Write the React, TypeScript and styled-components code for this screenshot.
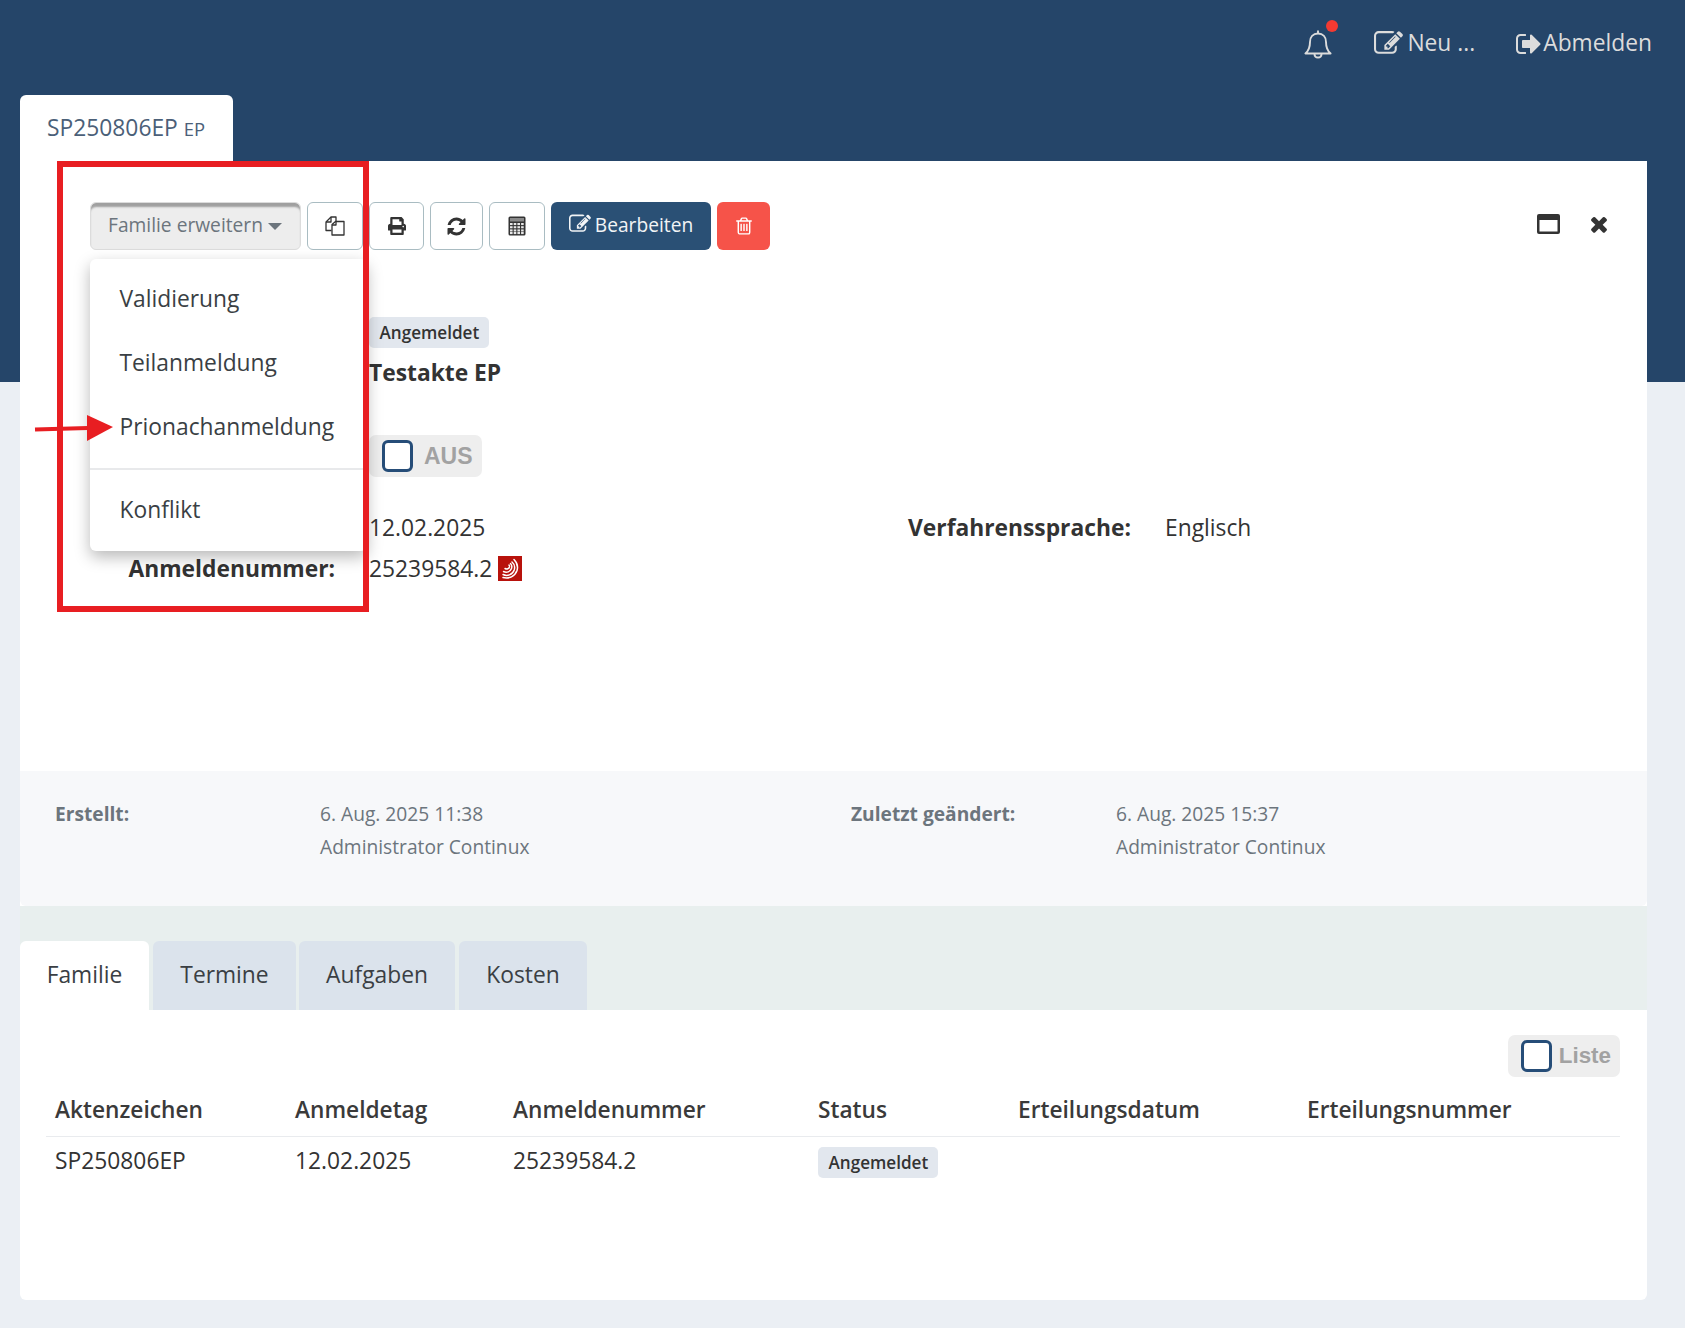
import React from "react";
import styled, { createGlobalStyle } from "styled-components";
import { FaPrint } from "react-icons/fa";

const Global = createGlobalStyle`
  html, body { margin: 0; padding: 0; }
  body {
    height: 1328px;
    overflow: hidden;
    background: linear-gradient(#254569 0, #254569 382px, #ebeff4 382px);
    font-family: "Open Sans", "Noto Sans", sans-serif;
    font-size: 22.8px;
    color: #333;
  }
  * { box-sizing: border-box; }
`;

const TopBar = styled.header`
  height: 95px;
  display: flex;
  align-items: center;
  justify-content: flex-end;
  padding: 0 33px 8px 0;
  color: #dcdcdc;
`;
const BellWrap = styled.span`
  position: relative;
  display: flex;
  margin-right: 42px;
`;
const Dot = styled.span`
  position: absolute;
  left: 22px;
  top: -8px;
  width: 12px;
  height: 12px;
  border-radius: 50%;
  background: #f33a32;
`;
const TopLink = styled.span<{ $gap: number; $ml?: number }>`
  display: flex;
  align-items: center;
  gap: ${(p) => p.$gap}px;
  margin-left: ${(p) => p.$ml ?? 0}px;
  line-height: 1;
`;
const TabStrip = styled.div`
  display: flex;
  padding-left: 20px;
`;
const DocTab = styled.div`
  width: 213px;
  height: 66px;
  background: #fff;
  border-radius: 6px 6px 0 0;
  display: flex;
  align-items: center;
  padding: 0 0 2px 27px;
  color: #4b6078;
  small { font-size: 18.4px; margin-left: 6px; padding-top: 3px; }
`;
const Card = styled.main`
  position: relative;
  margin: 0 38px 0 20px;
  height: 1139px;
  background: #fff;
  border-radius: 0 0 6px 6px;
`;
const TopSection = styled.section`
  position: relative;
  height: 610px;
  padding-top: 41px;
`;
const Toolbar = styled.div`
  display: flex;
  align-items: flex-start;
  padding-left: 70px;
  height: 48px;
`;
const FamilyButton = styled.button`
  width: 211px;
  height: 48px;
  margin-right: 6px;
  padding: 0 1px 4px 0;
  border: 1px solid #dcdcdc;
  border-radius: 6px;
  background: #ededed;
  box-shadow: inset 0 5px 2px -1px #a0a0a0;
  color: #6c757d;
  font: 400 19.2px "Open Sans", sans-serif;
  display: flex;
  align-items: center;
  justify-content: center;
  gap: 5px;
`;
const Caret = styled.i`
  width: 0;
  height: 0;
  margin-top: 4px;
  border-left: 7px solid transparent;
  border-right: 7px solid transparent;
  border-top: 7px solid #6c757d;
`;
const IconButton = styled.button<{ $w: number }>`
  width: ${(p) => p.$w}px;
  height: 48px;
  margin-right: 6px;
  border: 1px solid #a9bcc2;
  border-radius: 6px;
  background: #fff;
  color: #333;
  display: flex;
  align-items: center;
  justify-content: center;
  padding: 0;
`;
const EditButton = styled.button`
  width: 160px;
  height: 48px;
  margin-right: 6px;
  border: 0;
  border-radius: 6px;
  background: #2a5075;
  color: #f2f4f6;
  font: 400 19.2px "Open Sans", sans-serif;
  display: flex;
  align-items: center;
  justify-content: center;
  gap: 4px;
  padding: 0 0 4px;
`;
const DeleteButton = styled.button`
  width: 53px;
  height: 48px;
  border: 0;
  border-radius: 6px;
  background: #f65349;
  color: #fff;
  display: flex;
  align-items: center;
  justify-content: center;
  padding: 0;
`;
const WindowTools = styled.div`
  margin-left: auto;
  padding: 10px 36px 0 0;
  display: flex;
  align-items: center;
  gap: 27px;
  color: #333;
`;
const ValueRow = styled.div<{ $top: number; $h: number }>`
  display: grid;
  grid-template-columns: 315px 34px 539px 222px 35px 1fr;
  align-items: center;
  margin-top: ${(p) => p.$top}px;
  height: ${(p) => p.$h}px;
`;
const Label = styled.div<{ $col: number }>`
  grid-column: ${(p) => p.$col};
  font-weight: 700;
  text-align: right;
  white-space: nowrap;
`;
const Value = styled.div<{ $col: number }>`
  grid-column: ${(p) => p.$col};
  display: flex;
  align-items: center;
  gap: 6px;
`;
const Title = styled.div`
  grid-column: 3;
  font-weight: 700;
`;
const Badge = styled.span`
  display: inline-flex;
  align-items: center;
  height: 31px;
  padding: 0 10px 0 10.500px;
  border-radius: 5px;
  background: #e2e7ee;
  color: #333;
  font-size: 17.1px;
  font-weight: 600;
`;
const RowBadge = styled(Badge)`
  margin-top: 2px;
  vertical-align: middle;
`;
const Toggle = styled.span<{ $size: number; $gap: number; $pad: number }>`
  display: inline-flex;
  align-items: center;
  height: 42px;
  padding: 0 9px 0 ${(p) => p.$pad}px;
  gap: ${(p) => p.$gap}px;
  border-radius: 7px;
  background: #eeeeee;
  color: #a2a2a2;
  font: 700 ${(p) => p.$size}px "Liberation Sans", Arial, sans-serif;
`;
const Check = styled.i`
  width: 31px;
  height: 32px;
  border: 3.5px solid #264d78;
  border-radius: 6px;
  background: #fff;
`;
const Menu = styled.nav`
  position: absolute;
  left: 70px;
  top: 98px;
  width: 277px;
  height: 292px;
  padding-top: 8px;
  background: #fff;
  border-radius: 6px;
  box-shadow: 0 6px 16px rgba(0, 0, 0, 0.28);
  z-index: 2;
`;
const MenuItem = styled.div`
  height: 64px;
  line-height: 64px;
  padding-left: 29.5px;
  color: #3a3f44;
`;
const MenuDivider = styled.hr`
  margin: 9px 0 8px;
  border: 0;
  border-top: 2px solid #e8e9eb;
`;
const Frame = styled.div`
  position: absolute;
  left: 37px;
  top: 0;
  width: 312px;
  height: 451px;
  border: 6px solid #e81e22;
  z-index: 3;
  pointer-events: none;
`;
const Arrow = styled.svg`
  position: absolute;
  left: 12px;
  top: 252px;
  z-index: 4;
`;
const Meta = styled.section`
  height: 135px;
  padding: 26px 0 0 35px;
  display: grid;
  grid-template-columns: 265px 531px 265px 1fr;
  background: #f7f8fa;
  border-radius: 0 0 6px 6px;
  color: #6c757d;
  font-size: 19.2px;
  line-height: 33px;
  b { font-weight: 700; }
`;
const TabBand = styled.div`
  height: 104px;
  padding-top: 35px;
  display: flex;
  background: #e8efee;
`;
const PanelTab = styled.div<{ $w: number; $active?: boolean; $gap: number }>`
  width: ${(p) => p.$w}px;
  margin-right: ${(p) => p.$gap}px;
  height: 69px;
  padding-bottom: 2px;
  display: flex;
  align-items: center;
  justify-content: center;
  border-radius: 6px 6px 0 0;
  background: ${(p) => (p.$active ? "#fff" : "#dbe3ec")};
  color: #3a3f44;
`;
const Panel = styled.section`
  padding: 25px 27px 0 26px;
`;
const PanelTools = styled.div`
  display: flex;
  justify-content: flex-end;
  height: 42px;
`;
const Table = styled.table`
  width: 100%;
  border-collapse: collapse;
  table-layout: fixed;
`;
const Th = styled.th<{ $w?: number }>`
  width: ${(p) => (p.$w ? `${p.$w}px` : "auto")};
  height: 59px;
  padding: 6px 0 0 9px;
  text-align: left;
  font-weight: 600;
  font-size: 22.7px;
  color: #3a3a3a;
  border-bottom: 1px solid #e9ebee;
  white-space: nowrap;
`;
const Td = styled.td`
  height: 47px;
  padding: 2px 0 0 9px;
  vertical-align: middle;
`;

const Fa = ({ d, size, color = "currentColor" }: { d: string; size: number; color?: string }) => (
  <svg width={size} height={size} viewBox="0 0 1792 1792" fill={color} aria-hidden>
    <path d={d} />
  </svg>
);
const EDIT =
  "M888 1184l116-116-152-152-116 116v56h96v96h56zm440-720q-16-16-33 1l-350 350q-17 17-1 33t33-1l350-350q17-17 1-33zm80 594v190q0 119-84.500 203.500t-203.500 84.500h-832q-119 0-203.500-84.500t-84.500-203.500v-832q0-119 84.500-203.500t203.500-84.500h832q63 0 117 25 15 7 18 23 3 17-9 29l-49 49q-14 14-32 8-23-6-45-6h-832q-66 0-113 47t-47 113v832q0 66 47 113t113 47h832q66 0 113-47t47-113v-126q0-13 9-22l64-64q15-15 35-7t20 29zm-96-738l288 288-672 672h-288v-288zm444 132l-92 92-288-288 92-92q28-28 68-28t68 28l152 152q28 28 28 68t-28 68z";
const SIGNOUT =
  "M704 1440q0 4 1 20t.5 26.500-3 23.500-10 19.500-20.500 6.500h-320q-119 0-203.500-84.500t-84.500-203.500v-704q0-119 84.500-203.500t203.500-84.500h320q13 0 22.500 9.500t9.500 22.500q0 4 1 20t.5 26.500-3 23.500-10 19.500-20.500 6.500h-320q-66 0-113 47t-47 113v704q0 66 47 113t113 47h312l11.500 1 11.500 3 8 5.500 7 9 2 13.500zm928-544q0 26-19 45l-544 544q-19 19-45 19t-45-19-19-45v-288h-448q-26 0-45-19t-19-45v-384q0-26 19-45t45-19h448v-288q0-26 19-45t45-19 45 19l544 544q19 19 19 45z";
const REFRESH =
  "M1639 1056q0 5-1 7-64 268-268 434.500t-478 166.500q-146 0-282.500-55t-243.500-157l-129 129q-19 19-45 19t-45-19-19-45v-448q0-26 19-45t45-19h448q26 0 45 19t19 45-19 45l-137 137q71 66 161 102t187 36q134 0 250-65t186-179q11-17 53-117 8-23 30-23h192q13 0 22.500 9.500t9.500 22.500zm25-800v448q0 26-19 45t-45 19h-448q-26 0-45-19t-19-45 19-45l138-138q-148-137-349-137-134 0-250 65t-186 179q-11 17-53 117-8 23-30 23h-199q-13 0-22.500-9.500t-9.500-22.500v-7q65-268 270-434.500t480-166.500q146 0 284 55.500t245 156.500l130-129q19-19 45-19t45 19 19 45z";
const TRASH =
  "M704 736v576q0 14-9 23t-23 9h-64q-14 0-23-9t-9-23v-576q0-14 9-23t23-9h64q14 0 23 9t9 23zm256 0v576q0 14-9 23t-23 9h-64q-14 0-23-9t-9-23v-576q0-14 9-23t23-9h64q14 0 23 9t9 23zm256 0v576q0 14-9 23t-23 9h-64q-14 0-23-9t-9-23v-576q0-14 9-23t23-9h64q14 0 23 9t9 23zm128 724v-948h-896v948q0 22 7 40.500t14.500 27 10.500 8.500h832q3 0 10.500-8.500t14.500-27 7-40.500zm-672-1076h448l-48-117q-7-9-17-11h-317q-10 2-17 11zm928 32v64q0 14-9 23t-23 9h-96v948q0 83-47 143.500t-113 60.500h-832q-66 0-113-63t-47-146v-943h-96q-14 0-23-9t-9-23v-64q0-14 9-23t23-9h309l70-167q15-37 54-63t79-26h320q40 0 79 26t54 63l70 167h309q14 0 23 9t9 23z";
const TIMES =
  "M1490 1322q0 40-28 68l-136 136q-28 28-68 28t-68-28l-294-294-294 294q-28 28-68 28t-68-28l-136-136q-28-28-28-68t28-68l294-294-294-294q-28-28-28-68t28-68l136-136q28-28 68-28t68 28l294 294 294-294q28-28 68-28t68 28l136 136q28 28 28 68t-28 68l-294 294 294 294q28 28 28 68z";

const Bell = () => (
  <svg width="28" height="32" viewBox="0 0 28 30" fill="none" stroke="#dcdcdc" strokeWidth="1.9" strokeLinejoin="round" aria-hidden>
    <path d="M14 4.500c-5 0-8 3.600-8 8.500 0 6-1.600 9-4.600 11.500h25.200C23.600 22 22 19 22 13c0-4.900-3-8.500-8-8.500z" />
    <path d="M14 1.500v3" />
    <path d="M10.500 25c0 2.200 1.500 3.500 3.500 3.500s3.500-1.300 3.500-3.500" />
  </svg>
);
const Files = () => (
  <svg width="20" height="20" viewBox="0 0 20 20" fill="none" stroke="#333" strokeWidth="1.3" strokeLinejoin="round" aria-hidden>
    <path d="M6.500 14.500H1V6l5-5h5v5" />
    <path d="M6 1v5H1" />
    <path d="M7 19V8.500L10.500 5.500H19V19z" fill="#fff" />
    <path d="M11 5.500V9H7" />
  </svg>
);
const Calculator = () => (
  <svg width="18" height="20" viewBox="0 0 18 20" aria-hidden>
    <rect x="0.500" y="0.500" width="17" height="19" rx="1.500" fill="#333" />
    <rect x="2" y="2" width="14" height="3.500" fill="#8a8a8a" />
    <g fill="#e8e8e8">
      {[7, 10.2, 13.4, 16].map((y) =>
        [2, 5.700, 9.400, 13.100].map((x) => <rect key={`${x}-${y}`} x={x} y={y} width="2.600" height="2.100" />)
      )}
    </g>
  </svg>
);
const WindowIcon = () => (
  <svg width="23" height="20" viewBox="0 0 23 20" aria-hidden>
    <rect width="23" height="20" rx="2" fill="#333" />
    <rect x="2.500" y="6" width="18" height="11.500" fill="#fff" />
  </svg>
);
const EpLogo = () => (
  <svg width="24" height="25" viewBox="0 0 24 25" aria-hidden>
    <rect width="24" height="25" fill="#b8120c" />
    <g fill="none" stroke="#fff" strokeWidth="1.500" strokeLinecap="round">
      <path d="M5 21.500c6 1.500 12-1 14-7 1.200-4 0-8-3-11" />
      <path d="M5 18.500c4 2 9.500.5 11.200-4.500 1-3.200 0-6.200-2.200-8" />
      <path d="M5.500 15.500c3 1.600 6.700.5 8-3 .7-2 .2-3.800-1-5" />
      <path d="M7 12.500c2 1 4 .3 4.500-1.500.2-.8 0-1.300-.5-2" />
    </g>
  </svg>
);

export default function App() {
  return (
    <>
      <Global />
      <TopBar>
        <BellWrap>
          <Bell />
          <Dot />
        </BellWrap>
        <TopLink $gap={4}>
          <Fa d={EDIT} size={29} />
          Neu ...
        </TopLink>
        <TopLink $gap={0} $ml={40}>
          <Fa d={SIGNOUT} size={28} />
          Abmelden
        </TopLink>
      </TopBar>
      <TabStrip>
        <DocTab>
          SP250806EP <small>EP</small>
        </DocTab>
      </TabStrip>
      <Card>
        <TopSection>
          <Toolbar>
            <FamilyButton>
              Familie erweitern <Caret />
            </FamilyButton>
            <IconButton $w={56}>
              <Files />
            </IconButton>
            <IconButton $w={55}>
              <FaPrint size={18} />
            </IconButton>
            <IconButton $w={53}>
              <Fa d={REFRESH} size={21} />
            </IconButton>
            <IconButton $w={56}>
              <Calculator />
            </IconButton>
            <EditButton>
              <Fa d={EDIT} size={22} /> Bearbeiten
            </EditButton>
            <DeleteButton>
              <Fa d={TRASH} size={20} />
            </DeleteButton>
            <WindowTools>
              <WindowIcon />
              <Fa d={TIMES} size={24} />
            </WindowTools>
          </Toolbar>
          <Menu>
            <MenuItem>Validierung</MenuItem>
            <MenuItem>Teilanmeldung</MenuItem>
            <MenuItem>Prionachanmeldung</MenuItem>
            <MenuDivider />
            <MenuItem>Konflikt</MenuItem>
          </Menu>
          <ValueRow $top={67} $h={31}>
            <Value $col={3}>
              <Badge>Angemeldet</Badge>
            </Value>
          </ValueRow>
          <ValueRow $top={6} $h={36}>
            <Title>Testakte EP</Title>
          </ValueRow>
          <ValueRow $top={45} $h={42}>
            <Value $col={3}>
              <Toggle $size={23} $gap={11} $pad={13}>
                <Check /> AUS
              </Toggle>
            </Value>
          </ValueRow>
          <ValueRow $top={30} $h={41}>
            <Value $col={3}>12.02.2025</Value>
            <Label $col={4}>Verfahrenssprache:</Label>
            <Value $col={6}>Englisch</Value>
          </ValueRow>
          <ValueRow $top={0} $h={40}>
            <Label $col={1}>Anmeldenummer:</Label>
            <Value $col={3}>
              25239584.2 <EpLogo />
            </Value>
          </ValueRow>
        </TopSection>
        <Meta>
          <b>Erstellt:</b>
          <span>
            6. Aug. 2025 11:38
            <br />
            Administrator Continux
          </span>
          <b>Zuletzt geändert:</b>
          <span>
            6. Aug. 2025 15:37
            <br />
            Administrator Continux
          </span>
        </Meta>
        <TabBand>
          <PanelTab $w={129} $gap={4} $active>
            Familie
          </PanelTab>
          <PanelTab $w={143} $gap={3}>
            Termine
          </PanelTab>
          <PanelTab $w={156} $gap={4}>
            Aufgaben
          </PanelTab>
          <PanelTab $w={128} $gap={0}>
            Kosten
          </PanelTab>
        </TabBand>
        <Panel>
          <PanelTools>
            <Toggle $size={22.4} $gap={7} $pad={13}>
              <Check /> Liste
            </Toggle>
          </PanelTools>
          <Table>
            <thead>
              <tr>
                <Th $w={240}>Aktenzeichen</Th>
                <Th $w={218}>Anmeldetag</Th>
                <Th $w={305}>Anmeldenummer</Th>
                <Th $w={200}>Status</Th>
                <Th $w={289}>Erteilungsdatum</Th>
                <Th>Erteilungsnummer</Th>
              </tr>
            </thead>
            <tbody>
              <tr>
                <Td>SP250806EP</Td>
                <Td>12.02.2025</Td>
                <Td>25239584.2</Td>
                <Td>
                  <RowBadge>Angemeldet</RowBadge>
                </Td>
                <Td />
                <Td />
              </tr>
            </tbody>
          </Table>
        </Panel>
        <Frame />
        <Arrow width="82" height="30" viewBox="0 0 82 30">
          <path d="M3 16.500L56 15" stroke="#e81e22" strokeWidth="4" />
          <path d="M55 2L81 14 55 28z" fill="#e81e22" />
        </Arrow>
      </Card>
    </>
  );
}
